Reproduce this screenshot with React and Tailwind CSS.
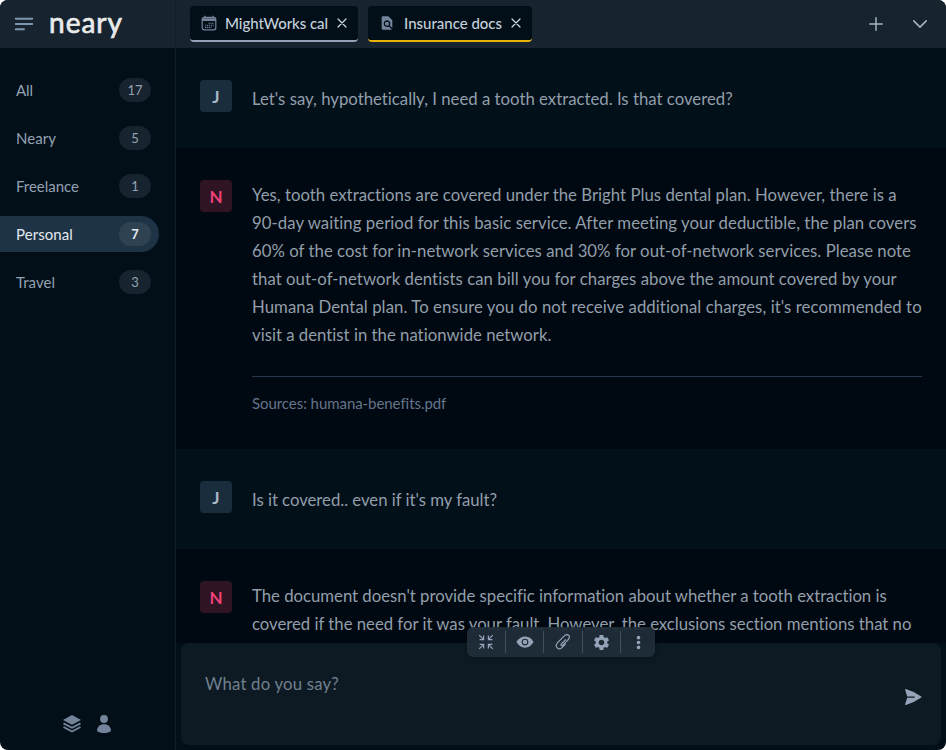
import { useLayoutEffect, useRef, useState } from "react";
import { IoEye } from "react-icons/io5";
import { MdFindInPage, MdSettings } from "react-icons/md";
import {
  HiOutlineBars3BottomLeft,
  HiOutlineChevronDown,
  HiOutlinePlus,
  HiOutlineXMark,
  HiPaperAirplane,
} from "react-icons/hi2";

// Single line of text tracked so that it fills the given width.
function Fit({ width, className = "", children }) {
  const ref = useRef(null);
  const [spacing, setSpacing] = useState(0);
  useLayoutEffect(() => {
    const natural = ref.current.getBoundingClientRect().width;
    setSpacing((width - natural) / children.length);
  }, [width, children]);
  return (
    <span ref={ref} className={`inline-block whitespace-nowrap ${className}`} style={{ letterSpacing: `${spacing}px` }}>
      {children}
    </span>
  );
}

const folders = [
  { name: "All", count: 17, width: 17 },
  { name: "Neary", count: 5, width: 40 },
  { name: "Freelance", count: 1, width: 63 },
  { name: "Personal", count: 7, width: 57, active: true },
  { name: "Travel", count: 3, width: 39 },
];

const answer = [
  ["Yes, tooth extractions are covered under the Bright Plus dental plan. However, there is a", 645],
  ["90-day waiting period for this basic service. After meeting your deductible, the plan covers", 665],
  ["60% of the cost for in-network services and 30% for out-of-network services. Please note", 659],
  ["that out-of-network dentists can bill you for charges above the amount covered by your", 645],
  ["Humana Dental plan. To ensure you do not receive additional charges, it's recommended to", 670],
  ["visit a dentist in the nationwide network.", 300],
];

const followUp = [
  ["The document doesn't provide specific information about whether a tooth extraction is", 635],
  ["covered if the need for it was your fault. However, the exclusions section mentions that no", 660],
];

function CalendarIcon({ className }) {
  return (
    <svg viewBox="0 0 16 16" className={className} fill="none" stroke="currentColor">
      <rect x="1.2" y="2.4" width="13.6" height="12.4" rx="2" strokeWidth="1.2" />
      <path d="M1.2 4.6h13.6" strokeWidth="2.6" />
      <path d="M4 .8v2M12 .8v2" strokeWidth="1.3" />
      <path d="M7.5 8.2h5.2M4 10.3h8.7M4 12.4h6.5" strokeWidth="1.1" strokeDasharray="1.2 .7" />
    </svg>
  );
}

function LayersIcon({ className }) {
  return (
    <svg viewBox="0 0 20 20" className={className} fill="currentColor">
      <path d="M10 1 19 5.9 10 10.8 1 5.9Z" />
      <path
        d="m1.5 9.3 8.5 4.5 8.5-4.5M1.5 13l8.5 4.5 8.5-4.5"
        fill="none"
        stroke="currentColor"
        strokeWidth="1.9"
      />
    </svg>
  );
}

function PersonIcon({ className }) {
  return (
    <svg viewBox="0 0 20 20" className={className} fill="currentColor">
      <circle cx="10" cy="5" r="3.9" />
      <path d="M3 17C3 12.6 6 10.2 10 10.2S17 12.6 17 17C15.2 18.5 12.8 19 10 19S4.8 18.5 3 17Z" />
    </svg>
  );
}

function CollapseIcon({ className }) {
  return (
    <svg viewBox="0 0 16 16" className={className} fill="none" stroke="currentColor" strokeWidth="1.2">
      <path d="M1.2 1.2l4 4M5.6 1.6v4h-4M14.8 1.2l-4 4M10.4 1.6v4h4M1.2 14.8l4-4M5.6 14.4v-4h-4M14.8 14.8l-4-4M10.4 14.4v-4h4" />
    </svg>
  );
}

function ClipIcon({ className }) {
  return (
    <svg
      viewBox="0 0 16 16"
      className={className}
      fill="none"
      stroke="currentColor"
      strokeWidth="1.2"
      strokeLinecap="round"
    >
      <path d="M10.6 5.6 6.3 10c-1 1.1.4 2.3 1.4 1.3l5.6-5.8c3-3.3-.9-6.7-4-3.6L2.6 8.7c-3.6 3.8 1 8.3 4.7 4.6l2.9-3" />
    </svg>
  );
}

function DotsIcon({ className }) {
  return (
    <svg viewBox="0 0 16 16" className={className} fill="currentColor">
      <circle cx="8" cy="2.8" r="1.9" />
      <circle cx="8" cy="8" r="1.9" />
      <circle cx="8" cy="13.2" r="1.9" />
    </svg>
  );
}

function Avatar({ bot }) {
  return (
    <div
      className={`flex size-8 shrink-0 items-center justify-center rounded pt-px text-[17px] font-bold ${
        bot ? "bg-[#2f1424] text-[#ee4177]" : "bg-[#1a2d3d] text-[#a9b8c8]"
      }`}
    >
      {bot ? "N" : "J"}
    </div>
  );
}

function Lines({ lines }) {
  return lines.map(([text, width]) => (
    <div key={text} className="h-7 pt-px">
      <Fit width={width}>{text}</Fit>
    </div>
  ));
}

function UserMessage({ text, width, className }) {
  return (
    <div className={`flex shrink-0 gap-5 bg-[#02101a] px-6 pt-8 ${className}`}>
      <Avatar />
      <div className="pt-1">
        <Lines lines={[[text, width]]} />
      </div>
    </div>
  );
}

function Tab({ icon, label, width, className }) {
  return (
    <div className={`flex h-9 items-center rounded border-b-2 bg-[#020f19] pl-[11px] text-[15px] font-medium text-[#c5d0dc] ${className}`}>
      {icon}
      <Fit width={width}>{label}</Fit>
      <HiOutlineXMark className="ml-1.5 size-4 text-[#d0d8e0]" strokeWidth={1.8} />
    </div>
  );
}

export default function App() {
  return (
    <div className="h-[750px] w-[946px] bg-white font-['Lato','Noto_Sans',sans-serif]">
      <div className="flex h-full overflow-hidden rounded-lg bg-[#020f19]">
        <aside className="flex w-44 shrink-0 flex-col border-r border-[#10202b]">
          <div className="flex h-12 shrink-0 items-center bg-[#17232e] pl-3">
            <HiOutlineBars3BottomLeft className="size-6 text-[#7f97ad]" strokeWidth={1.9} />
            <div className="ml-[13px] pb-[5px] text-[28px] leading-8 text-[#e9ebeb] [-webkit-text-stroke:0.7px_#e9ebeb]">
              <Fit width={74}>neary</Fit>
            </div>
          </div>
          <nav className="mt-6 flex flex-col gap-3">
            {folders.map((f) => (
              <div
                key={f.name}
                className={`flex h-9 w-[159px] items-center justify-between rounded-r-full pr-2 pl-4 text-[15px] ${
                  f.active ? "bg-[#1e3345] text-[#e4eaf0]" : "text-[#93a2b2]"
                }`}
              >
                <Fit width={f.width}>{f.name}</Fit>
                <span
                  className={`flex h-6 w-8 items-center justify-center rounded-full pt-0.5 text-[13px] ${
                    f.active ? "bg-[#2e4252] font-bold" : "bg-[#17232e]"
                  }`}
                >
                  {f.count}
                </span>
              </div>
            ))}
          </nav>
          <div className="mt-auto flex gap-3 pb-4 pl-[62px] text-[#74849a]">
            <LayersIcon className="size-5" />
            <PersonIcon className="size-5" />
          </div>
        </aside>

        <main className="flex min-w-0 flex-1 flex-col text-[16.75px] leading-7 text-[#929eaa]">
          <header className="flex h-12 shrink-0 items-center bg-[#17232e] pr-4 pl-3.5">
            <Tab
              icon={<CalendarIcon className="mr-2 size-4 text-[#74849a]" />}
              label="MightWorks cal"
              width={103}
              className="w-[168px] border-[#94a3b8]"
            />
            <Tab
              icon={<MdFindInPage className="mr-[9px] size-4 text-[#74849a]" />}
              label="Insurance docs"
              width={98}
              className="ml-2.5 w-[164px] border-[#eab308]"
            />
            <HiOutlinePlus className="ml-auto size-5 text-[#a3b5c4]" strokeWidth={1.8} />
            <HiOutlineChevronDown className="ml-6 size-5 text-[#a3b5c4]" strokeWidth={1.8} />
          </header>

          <div className="flex h-[595px] shrink-0 flex-col overflow-hidden bg-[#000911]">
            <UserMessage
              text="Let's say, hypothetically, I need a tooth extracted. Is that covered?"
              width={481}
              className="h-[100px]"
            />
            <div className="flex h-[301px] shrink-0 gap-5 px-6 pt-8">
              <Avatar bot />
              <div className="flex-1">
                <Lines lines={answer} />
                <div className="mt-7 border-t border-[#26374b] pt-3 text-[15px] leading-7 text-[#64748b]">
                  <Fit width={194}>Sources: humana-benefits.pdf</Fit>
                </div>
              </div>
            </div>
            <UserMessage text="Is it covered.. even if it's my fault?" width={245} className="h-[100px]" />
            <div className="flex shrink-0 gap-5 px-6 pt-8">
              <Avatar bot />
              <div>
                <Lines lines={followUp} />
              </div>
            </div>
          </div>

          <div className="relative mx-[5px] mb-[5px] flex flex-1 justify-between rounded-lg bg-[#0d1a23] pr-[18px] pl-6">
            <div className="mt-[27px] text-[#71808f]">
              <Fit width={134}>What do you say?</Fit>
            </div>
            <HiPaperAirplane className="mt-[44px] size-5 text-[#94a3b8]" />
            <div className="absolute -top-4 left-[286px] flex h-[30px] w-[188px] items-center divide-x divide-[#415061] rounded-md bg-[#202d39]/95 text-[#94a3b8] shadow-md">
              <span className="flex h-[22px] w-[39px] items-center justify-center">
                <CollapseIcon className="size-4" />
              </span>
              <span className="flex h-[22px] w-[38px] items-center justify-center">
                <IoEye className="size-[18px]" />
              </span>
              <span className="flex h-[22px] w-[39px] items-center justify-center">
                <ClipIcon className="size-4" />
              </span>
              <span className="flex h-[22px] w-[38px] items-center justify-center">
                <MdSettings className="size-[19px]" />
              </span>
              <span className="flex h-[22px] flex-1 items-center justify-center">
                <DotsIcon className="size-[15px]" />
              </span>
            </div>
          </div>
        </main>
      </div>
    </div>
  );
}
